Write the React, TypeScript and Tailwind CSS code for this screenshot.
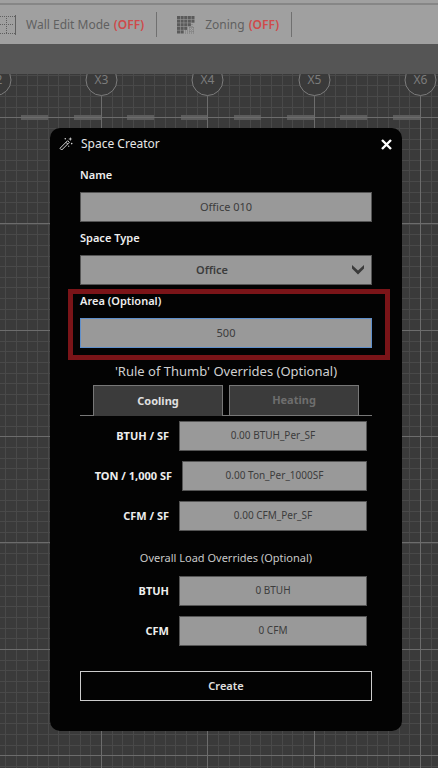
const CELL = 106.33;
const range = (n: number) => Array.from({ length: n }, (_, i) => i);

function DrawingCanvas() {
  const minorX = range(300).map((i) => Math.round(101 - CELL + (i * CELL) / 10) + 0.5);
  const minorY = range(200).map((i) => Math.round(0.8 + (i * CELL) / 10) + 0.5);
  const majorX = range(30).map((i) => Math.round(101 - CELL + i * CELL) + 0.5);
  const majorY = range(20).map((i) => Math.round(43 + i * CELL) + 0.5);
  return (
    <svg className="absolute inset-0 h-full w-full" aria-hidden="true">
      <g stroke="#494949" strokeWidth="1">
        {minorX.map((x) => <line key={x} x1={x} x2={x} y1="0" y2="2000" />)}
        {minorY.map((y) => <line key={y} x1="0" x2="3000" y1={y} y2={y} />)}
      </g>
      <g fill="#5c5c5c">
        {range(50).map((i) => <rect key={i} x={Math.round(-32 + (i * CELL) / 2)} y="41" width="27" height="5" />)}
      </g>
      <g stroke="#6c6c6c" strokeWidth="1">
        {majorX.map((x) => <line key={x} x1={x} x2={x} y1="22" y2="2000" />)}
        {majorY.map((y) => <line key={y} x1="0" x2="3000" y1={y} y2={y} />)}
      </g>
      {majorX.slice(0, 5).map((x, i) => (
        <g key={x}>
          <circle cx={x} cy="6" r="15.5" fill="#3a3a3a" stroke="#7c7c7c" />
          <text x={x} y="10" textAnchor="middle" fontSize="12" fill="#7c7c7c">{`X${i + 2}`}</text>
        </g>
      ))}
    </svg>
  );
}

function WandIcon() {
  return (
    <svg width="14" height="14" viewBox="0 0 14 14" fill="none" stroke="#d8d8d8" aria-hidden="true">
      <path d="M1 11.3L8.6 3.7L10.3 5.4L2.7 13Z M7 5.3L8.7 7" strokeLinejoin="round" />
      <g fill="#d8d8d8" stroke="none">
        <path d="M11.3 0L11.8 1.6L13.4 2.1L11.8 2.6L11.3 4.2L10.8 2.6L9.2 2.1L10.8 1.6Z" />
        <circle cx="6.3" cy="1.8" r="0.8" />
        <circle cx="12.7" cy="6.6" r="0.8" />
        <circle cx="9.7" cy="9.2" r="0.6" />
      </g>
    </svg>
  );
}

function WallIcon() {
  return (
    <svg width="20" height="20" viewBox="0 0 20 20" fill="none" stroke="#606060" aria-hidden="true">
      <path d="M0 1.5H19M0 18.5H19M1.5 1V19" strokeDasharray="1 1" />
      <path d="M0 9.5H18M10.5 1V19" strokeDasharray="1 1" />
      <path d="M19.5 0V20" strokeWidth="1" />
    </svg>
  );
}

function ZoningIcon() {
  const cells = range(25).filter((i) => ![14, 18, 19, 22, 23, 24].includes(i));
  return (
    <svg width="18" height="18" viewBox="0 0 18 18" aria-hidden="true">
      {cells.map((i) => (
        <rect key={i} x={(i % 5) * 3.6} y={Math.floor(i / 5) * 3.6} width="3.1" height="3.1" fill="#5a5a5a" />
      ))}
      <path d="M15 8V11M12 12H17M8 15H17M13 11V17M16 11V17M8 17H17" stroke="#777777" strokeDasharray="1 1" />
    </svg>
  );
}

function ToolbarToggle({ icon, label }: { icon: React.ReactNode; label: string }) {
  return (
    <button type="button" className="flex items-center whitespace-nowrap text-[12px] text-[#606060]">
      {icon}
      <span className="ml-2.5">{label}</span>
      <span className="ml-1 font-semibold text-[#cf4a4a]">(OFF)</span>
    </button>
  );
}

const inputClass =
  'h-[30px] w-full min-w-0 border border-[#555555] bg-[#999999] pb-0.5 text-center text-[#3c3c3c] outline-none';

function LoadField({ id, label, value, wide = false }: { id: string; label: string; value: string; wide?: boolean }) {
  return (
    <div className="flex items-center gap-2.5 pr-[5px]">
      <label
        htmlFor={id}
        className={`${wide ? 'w-[92px]' : 'w-[89px]'} shrink-0 whitespace-nowrap text-right text-[11px] font-bold text-[#eeeeee]`}
      >
        {label}
      </label>
      <input id={id} defaultValue={value} className={`${inputClass} text-[10px]`} />
    </div>
  );
}

const fieldLabel = 'mb-2 block text-[11px] leading-[18px] font-semibold text-[#eeeeee]';

export default function App() {
  return (
    <div className="flex min-h-screen flex-col bg-[#3a3a3a] font-['Noto_Sans','Open_Sans',sans-serif]">
      <header className="overflow-hidden bg-[#a0a0a0]">
        <div className="h-[5px] border-b-2 border-[#868686]" />
        <div className="flex h-[39px] items-center">
          <div className="-ml-1">
            <ToolbarToggle icon={<WallIcon />} label="Wall Edit Mode" />
          </div>
          <div className="ml-3 h-[25px] w-px bg-[#707070]" />
          <div className="ml-5">
            <ToolbarToggle icon={<ZoningIcon />} label="Zoning" />
          </div>
          <div className="ml-3 h-[25px] w-px bg-[#707070]" />
        </div>
        <div className="h-[30px] bg-[#555555]" />
      </header>

      <main className="relative flex-1 overflow-hidden pt-[54px] pr-9 pb-9 pl-[50px]">
        <DrawingCanvas />
        <section role="dialog" aria-labelledby="dialog-title" className="relative rounded-[10px] bg-[#030303] pb-[30px]">
          <div className="flex h-8 items-center pr-2.5 pl-[9px]">
            <WandIcon />
            <h1 id="dialog-title" className="ml-2 flex-1 text-[12px] text-[#e6e6e6]">Space Creator</h1>
            <button type="button" aria-label="Close">
              <svg width="11" height="11" viewBox="0 0 11 11" stroke="#ffffff" strokeWidth="2.4">
                <path d="M1 1L10 10M10 1L1 10" />
              </svg>
            </button>
          </div>

          <form className="px-[30px] pt-1.5" onSubmit={(e) => e.preventDefault()}>
            <div className="flex flex-col gap-[7px]">
              <div>
                <label htmlFor="name" className={fieldLabel}>Name</label>
                <input id="name" defaultValue="Office 010" className={`${inputClass} text-[11px]`} />
              </div>
              <div>
                <label htmlFor="space-type" className={fieldLabel}>Space Type</label>
                <div className="relative">
                  <select
                    id="space-type"
                    className="h-[30px] w-full appearance-none border border-[#555555] bg-[#999999] pr-7 text-center text-[11px] font-semibold text-[#3c3c3c] outline-none [text-align-last:center]"
                  >
                    <option>Office</option>
                  </select>
                  <svg className="pointer-events-none absolute top-2.5 right-2" width="12" height="10" viewBox="0 0 12 10" fill="#3a3a3a">
                    <path d="M0 0L6 5.5L12 0V3.5L6 9.5L0 3.5Z" />
                  </svg>
                </div>
              </div>
              <div className="relative">
                <div className="pointer-events-none absolute -top-[3px] -right-[18px] -bottom-3 -left-3 border-5 border-[#7a1418]" />
                <label htmlFor="area" className={fieldLabel}>Area (Optional)</label>
                <input
                  id="area"
                  defaultValue="500"
                  className="h-[30px] w-full border border-[#5f8fcb] bg-[#999999] pb-0.5 text-center text-[11px] text-[#3c3c3c] outline-none"
                />
              </div>
            </div>

            <h2 className="mt-3 text-center text-[13px] leading-[22px] text-[#d0d0d0]">'Rule of Thumb' Overrides (Optional)</h2>
            <div role="tablist" className="mt-[3px] flex justify-center gap-1.5 border-b border-[#777777]">
              <button type="button" role="tab" aria-selected="true" className="-mb-px h-[31px] w-[130px] border border-b-0 border-[#777777] bg-[#3b3b3b] text-[11px] font-bold text-[#e0e0e0]">
                Cooling
              </button>
              <button type="button" role="tab" aria-selected="false" className="h-[30px] w-[130px] border border-b-0 border-[#777777] bg-[#3b3b3b] text-[11px] font-bold text-[#6e6e6e]">
                Heating
              </button>
            </div>

            <div className="mt-[5px] flex flex-col gap-2.5">
              <LoadField id="btuh-sf" label="BTUH / SF" value="0.00 BTUH_Per_SF" />
              <LoadField id="ton-sf" label="TON / 1,000 SF" value="0.00 Ton_Per_1000SF" wide />
              <LoadField id="cfm-sf" label="CFM / SF" value="0.00 CFM_Per_SF" />
            </div>

            <h2 className="mt-[17px] text-center text-[11px] leading-5 text-[#c8c8c8]">Overall Load Overrides (Optional)</h2>
            <div className="mt-2 flex flex-col gap-2.5">
              <LoadField id="btuh" label="BTUH" value="0 BTUH" />
              <LoadField id="cfm" label="CFM" value="0 CFM" />
            </div>

            <button type="submit" className="mt-[25px] h-[30px] w-full border border-[#cccccc] text-[11px] font-semibold text-[#e0e0e0]">
              Create
            </button>
          </form>
        </section>
      </main>
    </div>
  );
}
